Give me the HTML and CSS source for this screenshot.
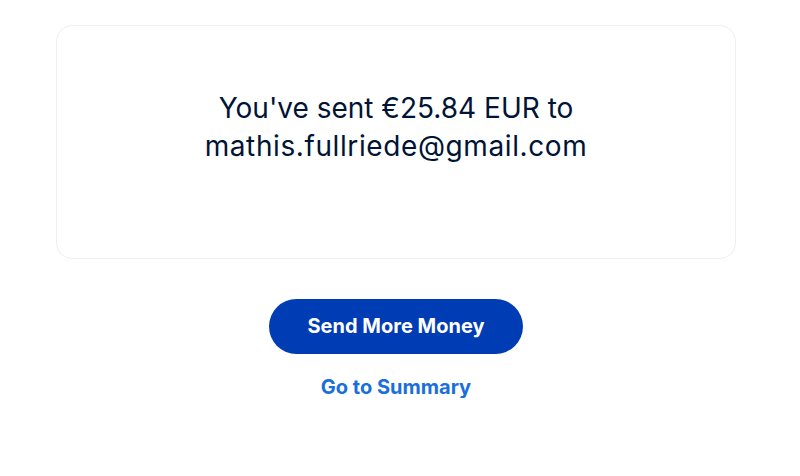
FILE: index.html
```html
<!DOCTYPE html>
<html lang="en">
<head>
    <meta charset="UTF-8">
    <title>Money sent</title>
    <link rel="stylesheet" href="styles.css">
</head>
<body>
    <div class="page">
        <div class="card">
            <h1 class="message">You've sent €25.84 EUR to<br><span class="email">mathis.fullriede@gmail.com</span></h1>
        </div>
        <div class="actions">
            <a class="btn-primary" href="#">Send More Money</a>
            <a class="link" href="#">Go to Summary</a>
        </div>
    </div>
</body>
</html>
```

FILE: styles.css
```css
html,
body {
    margin: 0;
    padding: 0;
    background: #fff;
}
body {
    font-family: Inter, "Liberation Sans", sans-serif;
    color: #001435;
}
.page {
    width: 680px;
    padding: 25px 0 0 56px;
}
.card {
    height: 234px;
    border: 1px solid #eceef0;
    border-radius: 16px;
    padding-top: 63px;
    box-sizing: border-box;
}
.message {
    margin: 0;
    font-size: 28px;
    line-height: 38px;
    font-weight: 400;
    text-align: center;
}
.email {
    letter-spacing: 0.6px;
}
.actions {
    display: flex;
    flex-direction: column;
    align-items: center;
    padding-top: 40px;
}
.btn-primary {
    display: block;
    width: 254px;
    height: 55px;
    line-height: 55px;
    border-radius: 28px;
    background: #003cb4;
    color: #fff;
    text-align: center;
    text-decoration: none;
    font-size: 20px;
    font-weight: 700;
}
.link {
    display: block;
    margin-top: 22px;
    line-height: 22px;
    color: #1a6fd8;
    text-decoration: none;
    font-size: 20px;
    font-weight: 700;
}
```
